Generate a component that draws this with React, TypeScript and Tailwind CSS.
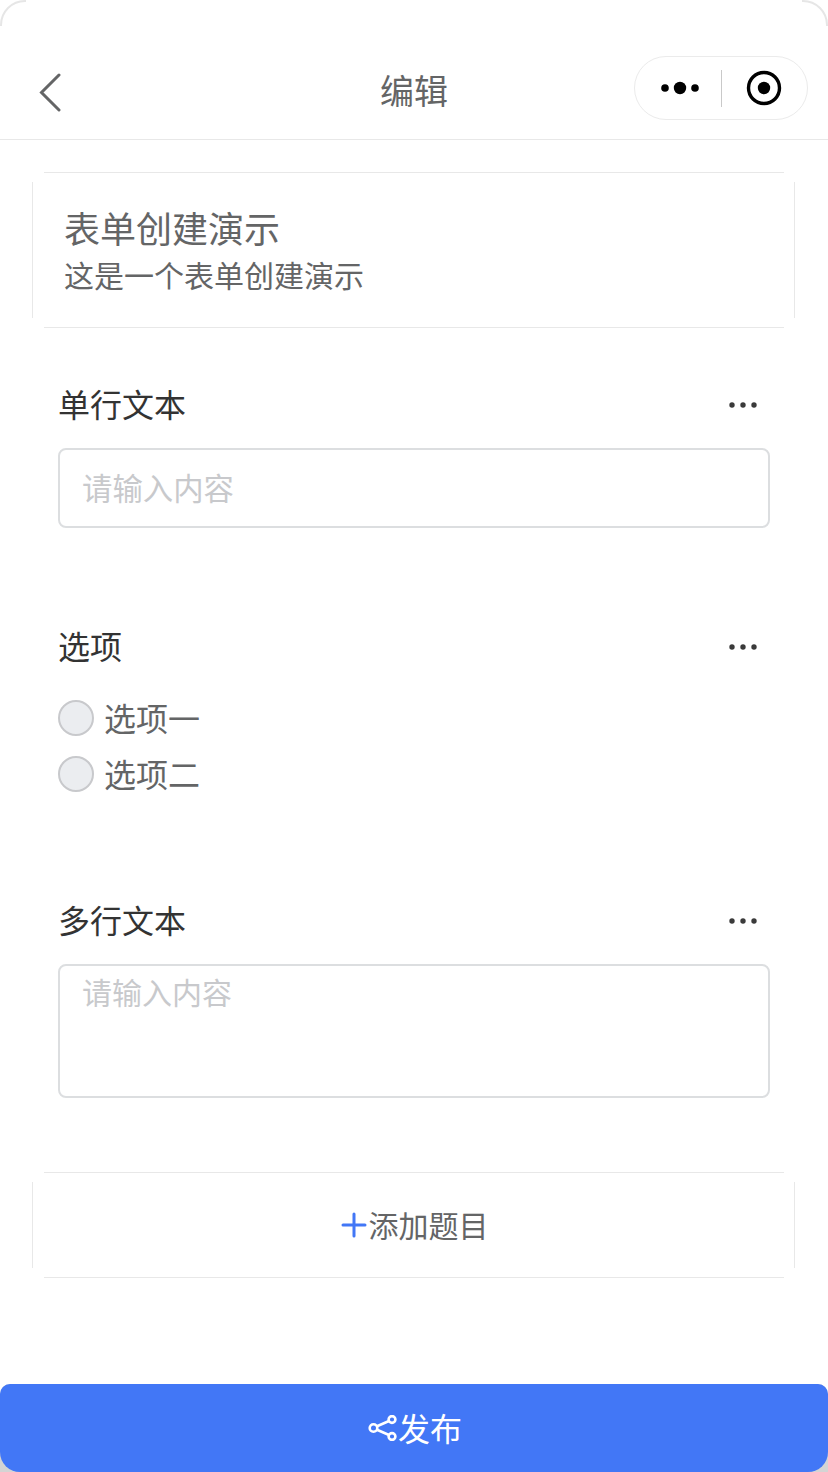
import React from 'react'

const cjk = { fontFamily: '"Noto Sans CJK SC", "Noto Sans", sans-serif' }

const CardShell: React.FC<{ height: string; children: React.ReactNode }> = ({ height, children }) => (
  <div className="ml-[32px] mr-[33px] flex flex-col">
    <div className="ml-[12px] mr-[11px] h-px shrink-0 bg-[#e8e8e8]" />
    <div className={`${height} my-[9px] border-x border-[#e8e8e8]`}>{children}</div>
    <div className="ml-[12px] mr-[11px] h-px shrink-0 bg-[#e8e8e8]" />
  </div>
)

const MoreDots = () => (
  <svg width="28" height="6" viewBox="0 0 28 6" fill="#3a3a3a">
    <circle cx="3" cy="3" r="2.7" />
    <circle cx="14" cy="3" r="2.7" />
    <circle cx="25" cy="3" r="2.7" />
  </svg>
)

const QuestionTitle: React.FC<{ title: string }> = ({ title }) => (
  <div className="flex h-[48px] items-center justify-between pl-[58px] pr-[71px]">
    <span className="mb-[4px] text-[32px] leading-[48px] text-[#333333]">{title}</span>
    <MoreDots />
  </div>
)

const Radio: React.FC<{ label: string }> = ({ label }) => (
  <div className="flex h-[56px] items-center pl-[58px]">
    <span className="h-[36px] w-[36px] rounded-full border-2 border-[#c8c9cc] bg-[#ebedf0]" />
    <span className="mb-[2px] ml-[10px] text-[32px] leading-[48px] text-[#646566]">{label}</span>
  </div>
)

// soft grey arc left by the phone frame in the top corners
const CornerArc: React.FC<{ className: string }> = ({ className }) => (
  <svg className={className} width="26" height="26" viewBox="0 0 26 26" fill="none" stroke="#e6e6e6" strokeWidth="2">
    <path d="M1 26 V25 A24 24 0 0 1 25 1 H26" />
  </svg>
)

export default function App() {
  return (
    <div className="relative flex h-[1472px] w-[828px] flex-col overflow-hidden bg-white" style={cjk}>
      <CornerArc className="absolute left-0 top-0" />
      <CornerArc className="absolute right-0 top-0 -scale-x-100" />

      {/* nav bar */}
      <header className="relative flex h-[140px] shrink-0 items-center border-b border-[#e8e8e8] pt-[40px]">
        <svg className="absolute left-[38px] top-[72px]" width="24" height="40" viewBox="0 0 24 40" fill="none" stroke="#646566" strokeWidth="3">
          <path d="M21 3 L3.5 20.5 L21 38" strokeLinecap="round" strokeLinejoin="miter" />
        </svg>
        <div className="w-full text-center text-[34px] leading-[46px] text-[#646566]">编辑</div>
        <div className="absolute left-[634px] top-[56px] flex h-[64px] w-[174px] items-center rounded-full border border-[#ebebeb] bg-white">
          <svg className="ml-[26px]" width="38" height="14" viewBox="0 0 38 14" fill="#000">
            <circle cx="4" cy="7" r="3.8" />
            <circle cx="19" cy="7" r="6.2" />
            <circle cx="34" cy="7" r="3.8" />
          </svg>
          <div className="ml-[22px] h-[37px] w-px bg-[#c9c9c9]" />
          <svg className="ml-[24px]" width="36" height="36" viewBox="0 0 36 36">
            <circle cx="18" cy="18" r="15.5" fill="none" stroke="#000" strokeWidth="3.4" />
            <circle cx="18" cy="18" r="6.2" fill="#000" />
          </svg>
        </div>
      </header>

      <div className="h-[32px] shrink-0" />

      {/* form header */}
      <CardShell height="h-[136px]">
        <div className="pl-[31px] pt-[18px]">
          <div className="text-[36px] leading-[54px] text-[#646566]">表单创建演示</div>
          <div className="text-[30px] leading-[40px] text-[#646566]">这是一个表单创建演示</div>
        </div>
      </CardShell>

      {/* single line */}
      <div className="mt-[53px]">
        <QuestionTitle title="单行文本" />
        <div className="mx-[58px] mt-[19px] flex h-[80px] w-[712px] items-center rounded-[8px] border-2 border-[#dcdee0] pl-[22px] text-[30.4px] text-[#c8c9cc]">
          请输入内容
        </div>
      </div>

      {/* options */}
      <div className="mt-[95px]">
        <QuestionTitle title="选项" />
        <div className="mt-[19px]">
          <Radio label="选项一" />
          <Radio label="选项二" />
        </div>
      </div>

      {/* multi line */}
      <div className="mt-[95px]">
        <QuestionTitle title="多行文本" />
        <div className="mx-[58px] mt-[19px] h-[134px] w-[712px] rounded-[8px] border-2 border-[#dcdee0] pl-[22px] pt-[2px] text-[30px] leading-[46px] text-[#c8c9cc]">
          请输入内容
        </div>
      </div>

      {/* add question */}
      <div className="mt-[74px]">
        <CardShell height="h-[86px]">
          <div className="flex h-full items-center justify-center pl-[2px]">
            <svg width="26" height="26" viewBox="0 0 26 26" stroke="#4277f6" strokeWidth="3" strokeLinecap="round">
              <path d="M2 13 H24 M13 2 V24" />
            </svg>
            <span className="mb-[2px] ml-[2px] text-[30px] leading-[44px] text-[#646566]">添加题目</span>
          </div>
        </CardShell>
      </div>

      {/* publish */}
      <div className="mt-auto rounded-t-[10px] bg-[#d4d4d4]">
        <div className="flex h-[88px] items-center justify-center rounded-b-[20px] rounded-t-[10px] bg-[#4277f6] pl-[2px]">
          <svg width="30" height="26" viewBox="0 0 30 26" fill="none" stroke="#fff" strokeWidth="2.6">
            <circle cx="5.5" cy="13" r="3.8" />
            <circle cx="24" cy="4.5" r="3.4" />
            <circle cx="24" cy="21.5" r="3.4" />
            <path d="M9 11.3 L21 6 M9 14.7 L21 20" />
          </svg>
          <span className="mb-[2px] text-[32px] leading-[46px] text-white">发布</span>
        </div>
      </div>
    </div>
  )
}
